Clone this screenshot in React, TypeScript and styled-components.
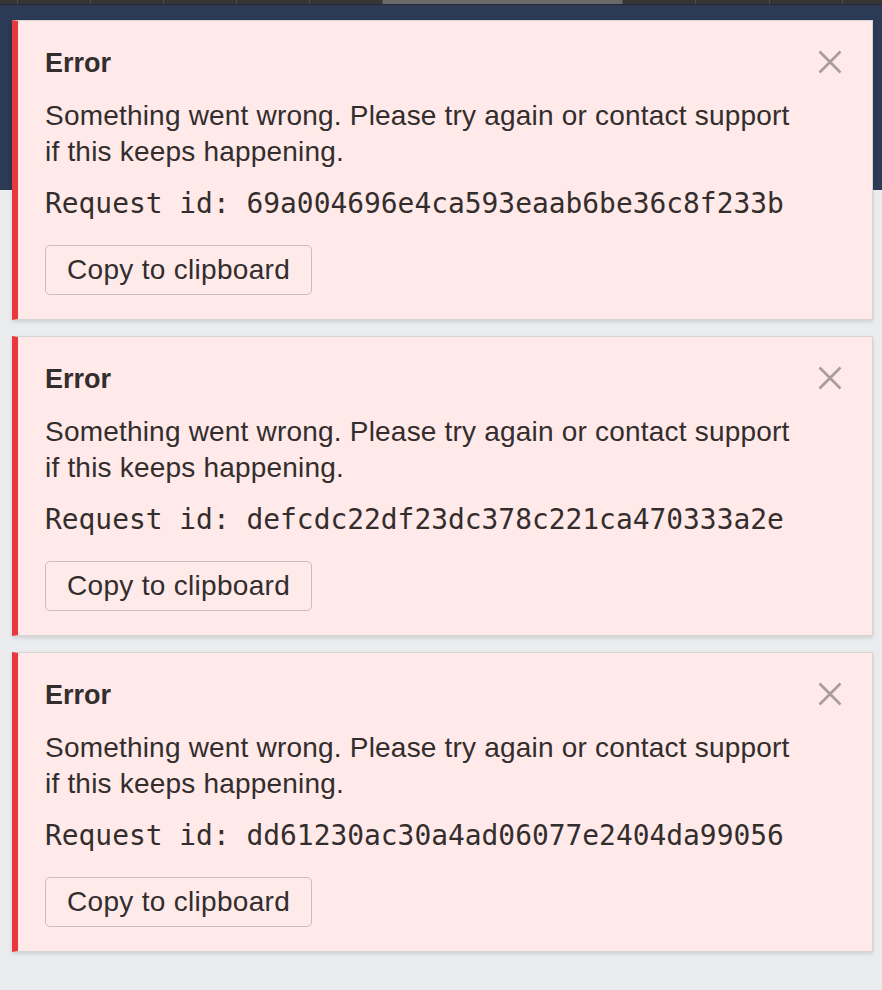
import React from "react";
import styled, { createGlobalStyle } from "styled-components";

const GlobalStyle = createGlobalStyle`
  html, body { margin: 0; padding: 0; }
  body {
    width: 882px;
    height: 990px;
    overflow: hidden;
    background: #ebecee;
    font-family: "Liberation Sans", Arial, sans-serif;
  }
`;

const Page = styled.div`
  position: relative;
  width: 882px;
  height: 990px;
  display: flex;
  flex-direction: column;
  background: #ebecee;
`;

const TabStrip = styled.div`
  display: flex;
  height: 4px;
  background: #363636;
  border-bottom: 1px solid #232a3a;
`;

const Tab = styled.div<{ $w: number; $active?: boolean }>`
  flex: 0 0 ${(p) => p.$w}px;
  background: ${(p) => (p.$active ? "#6a6a6a" : "#363636")};
  border-left: 1px solid #4d4d4d;
  &:first-child { border-left: none; }
`;

const NavBand = styled.div`
  height: 185px;
  background: #2d3a55;
`;

const Body = styled.div`
  flex: 1;
  background: #ebecee;
`;

const ToastStack = styled.div`
  position: absolute;
  top: 20px;
  left: 12px;
  right: 9px;
  display: flex;
  flex-direction: column;
  gap: 16px;
`;

const Toast = styled.div`
  display: flex;
  gap: 12px;
  background: #ffe9e9;
  border: 1px solid #d9d2d2;
  border-left: 6px solid #e8383d;
  padding: 24px 24px 24px 27px;
  box-shadow: 0 2px 4px rgba(0, 0, 0, 0.12);
  height: 250px;
`;

const Content = styled.div`
  flex: 1;
  display: flex;
  flex-direction: column;
  align-items: flex-start;
  color: #332d2d;
`;

const Title = styled.div`
  font-size: 27px;
  font-weight: 700;
  line-height: 36px;
  margin-bottom: 17px;
`;

const Message = styled.div`
  font-size: 28px;
  line-height: 36px;
  letter-spacing: 0.2px;
  margin-bottom: 16px;
`;

const RequestId = styled.div`
  font-family: "DejaVu Sans Mono", "Liberation Mono", monospace;
  font-size: 27.9px;
  line-height: 36px;
  margin-bottom: 23px;
  white-space: nowrap;
`;

const CopyButton = styled.button`
  height: 50px;
  padding: 0 21px;
  border: 1px solid #cbbcbc;
  border-radius: 5px;
  background: #ffeaea;
  color: #332d2d;
  font-family: "Liberation Sans", Arial, sans-serif;
  font-size: 28px;
  letter-spacing: 0.3px;
  line-height: 1;
  cursor: pointer;
`;

const CloseButton = styled.button`
  flex: 0 0 36px;
  width: 36px;
  height: 36px;
  margin-top: -1px;
  padding: 0;
  border: none;
  background: transparent;
  display: flex;
  align-items: center;
  justify-content: center;
  cursor: pointer;
`;

const CloseIcon = () => (
  <svg width="24" height="24" viewBox="0 0 24 24" fill="none">
    <path d="M1.5 1.5 L22.5 22.5 M22.5 1.5 L1.5 22.5" stroke="#a99c9c" strokeWidth="2.6" strokeLinecap="butt" />
  </svg>
);

const ids = [
  "69a004696e4ca593eaab6be36c8f233b",
  "defcdc22df23dc378c221ca470333a2e",
  "dd61230ac30a4ad06077e2404da99056",
];

const tabs: { w: number; active?: boolean }[] = [
  { w: 17 },
  { w: 72 },
  { w: 72 },
  { w: 72 },
  { w: 72 },
  { w: 72 },
  { w: 239, active: true },
  { w: 72 },
  { w: 73 },
  { w: 72 },
  { w: 49 },
];

export default function App() {
  return (
    <>
      <GlobalStyle />
      <Page>
        <TabStrip>
          {tabs.map((t, i) => (
            <Tab key={i} $w={t.w} $active={t.active} />
          ))}
        </TabStrip>
        <NavBand />
        <Body />
        <ToastStack>
          {ids.map((id) => (
            <Toast key={id}>
              <Content>
                <Title>Error</Title>
                <Message>
                  Something went wrong. Please try again or contact support if this keeps happening.
                </Message>
                <RequestId>Request id: {id}</RequestId>
                <CopyButton>Copy to clipboard</CopyButton>
              </Content>
              <CloseButton aria-label="Close">
                <CloseIcon />
              </CloseButton>
            </Toast>
          ))}
        </ToastStack>
      </Page>
    </>
  );
}
